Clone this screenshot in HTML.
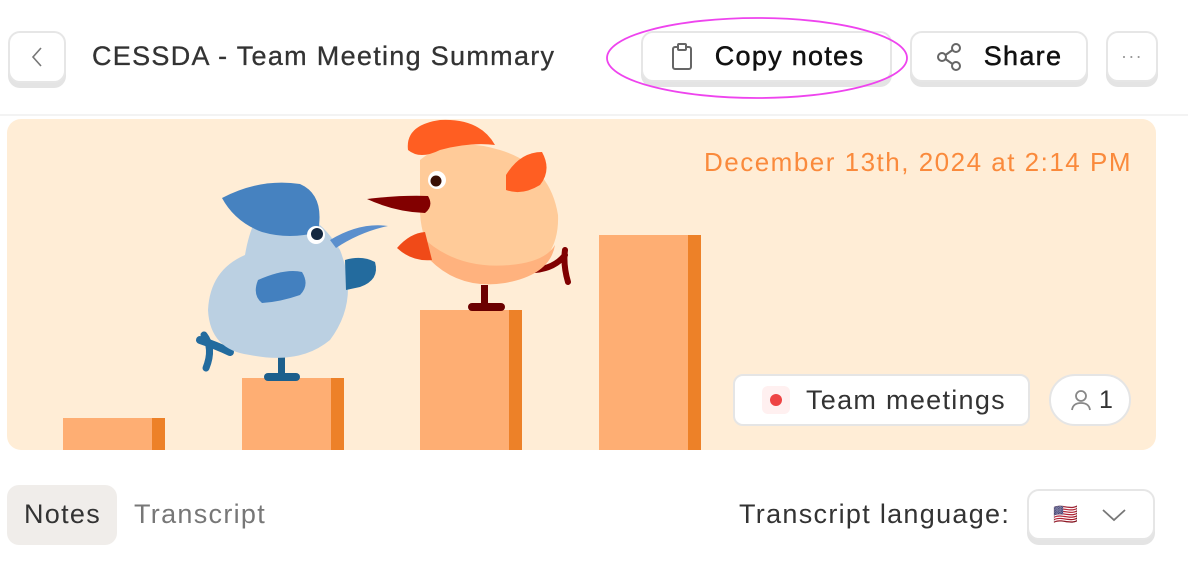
<!DOCTYPE html>
<html><head><meta charset="utf-8"><style>
*{margin:0;padding:0;box-sizing:border-box}
body{width:1188px;height:572px;background:#fff;font-family:"Liberation Sans",sans-serif;position:relative;overflow:hidden;letter-spacing:1.3px}
.btn{position:absolute;background:#fff;border:2px solid #e6e6e6;border-radius:12px;box-shadow:0 5px 0 #e4e4e4;display:flex;align-items:center;justify-content:center}
.t{position:absolute;white-space:nowrap}
.b{-webkit-text-stroke:0.5px currentColor}
</style></head><body>
<div class="btn" style="left:8px;top:31px;width:58px;height:52px"><svg width="16" height="24" viewBox="0 0 16 24"><path d="M12 3 L4 12 L12 21" fill="none" stroke="#777" stroke-width="1.6"/></svg></div>
<div class="t b" style="left:92px;top:41px;font-size:27px;color:#333;-webkit-text-stroke:0.3px #333">CESSDA - Team Meeting Summary</div>
<div class="btn" style="left:641px;top:31px;width:251px;height:51px"><svg width="26" height="30" viewBox="0 0 26 30" style="margin-right:20px"><rect x="4" y="5" width="18" height="22" rx="2" fill="none" stroke="#666" stroke-width="2"/><rect x="9" y="2" width="8" height="6" rx="1" fill="#fff" stroke="#666" stroke-width="2"/></svg><span class="b" style="font-size:27px;color:#111">Copy notes</span></div>
<div class="btn" style="left:910px;top:31px;width:178px;height:51px"><svg width="28" height="30" viewBox="0 0 28 30" style="margin-right:20px"><circle cx="20" cy="6" r="4" fill="none" stroke="#666" stroke-width="2"/><circle cx="6" cy="15" r="4" fill="none" stroke="#666" stroke-width="2"/><circle cx="20" cy="24" r="4" fill="none" stroke="#666" stroke-width="2"/><path d="M9.5 13 L16.5 8 M9.5 17 L16.5 22" stroke="#666" stroke-width="2"/></svg><span class="b" style="font-size:27px;color:#111">Share</span></div>
<div class="btn" style="left:1106px;top:31px;width:52px;height:51px;color:#999;font-size:18px">···</div>
<svg style="position:absolute;left:0;top:0" width="1188" height="120"><ellipse cx="757" cy="58" rx="150" ry="40" fill="none" stroke="#ee44ee" stroke-width="1.8"/></svg>
<div style="position:absolute;left:0;top:114px;width:1188px;height:2px;background:#f3f3f3"></div>
<div style="position:absolute;left:7px;top:119px;width:1149px;height:331px;background:#ffedd6;border-radius:14px;overflow:hidden">
<svg width="1149" height="331" viewBox="7 119 1149 331" style="position:absolute;left:0;top:0">
<rect x="63" y="418" width="102" height="40" fill="#feae73"/><rect x="152" y="418" width="13" height="40" fill="#ed8128"/>
<rect x="242" y="378" width="102" height="80" fill="#feae73"/><rect x="331" y="378" width="13" height="80" fill="#ed8128"/>
<rect x="420" y="310" width="102" height="150" fill="#feae73"/><rect x="509" y="310" width="13" height="150" fill="#ed8128"/>
<rect x="599" y="235" width="102" height="230" fill="#feae73"/><rect x="688" y="235" width="13" height="230" fill="#ed8128"/>
<path d="M200 340 Q215 345 230 352" stroke="#236b9e" stroke-width="8" fill="none" stroke-linecap="round"/>
<path d="M204 335 Q214 348 206 368" stroke="#236b9e" stroke-width="7" fill="none" stroke-linecap="round"/>
<rect x="278" y="355" width="7" height="22" fill="#1d5f8c"/><rect x="264" y="373" width="36" height="8" rx="4" fill="#1d5f8c"/>
<path d="M262 210 Q310 200 340 250 Q360 300 330 340 Q300 365 250 355 Q210 350 208 310 Q210 270 245 255 Q250 225 262 210Z" fill="#bbd0e2"/>
<path d="M345 260 Q362 255 375 262 Q380 280 360 287 L346 290Z" fill="#236b9e"/>
<path d="M222 198 Q260 178 300 184 Q325 195 318 232 Q290 240 262 232 Q235 222 222 198Z" fill="#4682c0"/>
<circle cx="316" cy="235" r="9" fill="#fff"/><circle cx="317" cy="234" r="6" fill="#142840"/>
<path d="M330 240 Q360 222 388 226 Q360 232 336 248Z" fill="#5b8fcd"/>
<path d="M258 280 Q285 268 302 272 Q310 285 300 295 Q280 302 262 303 Q252 295 258 280Z" fill="#4380bf"/>
<rect x="481" y="285" width="7" height="22" fill="#6b0000"/><rect x="468" y="303" width="37" height="8" rx="4" fill="#6b0000"/>
<path d="M535 270 Q555 268 565 255 M565 250 Q563 265 568 282" stroke="#800000" stroke-width="6" fill="none" stroke-linecap="round"/>
<path d="M420 160 Q450 135 500 150 Q550 165 558 215 Q560 265 510 280 Q465 290 440 265 Q418 240 420 200Z" fill="#ffcb99"/>
<path d="M420 235 Q455 270 510 265 Q545 262 555 245 Q550 275 505 283 Q460 290 430 260Z" fill="#ffb27e"/>
<path d="M408 150 Q405 125 440 120 Q480 118 495 145 Q470 142 440 150 Q420 160 408 150Z" fill="#ff5e22"/>
<path d="M506 175 Q520 152 542 152 Q552 170 540 185 Q522 196 506 190Z" fill="#ff5e22"/>
<path d="M397 248 Q410 233 425 232 L432 260 Q412 262 397 248Z" fill="#f04a18"/>
<circle cx="437" cy="180" r="9" fill="#fff"/><circle cx="436" cy="181" r="5.5" fill="#3a1005"/>
<path d="M367 199 Q400 195 428 196 Q434 206 425 213 Q395 212 367 199Z" fill="#820000"/>
</svg>
<div class="t" style="right:24px;top:28px;font-size:26px;color:#fa8a3c;letter-spacing:1.5px">December 13th, 2024 at 2:14 PM</div>
<div style="position:absolute;left:726px;top:255px;width:297px;height:52px;background:#fff;border:2px solid #e5e5e5;border-radius:10px;display:flex;align-items:center">
<div style="margin-left:27px;width:28px;height:28px;border-radius:6px;background:#fff0f0;display:flex;align-items:center;justify-content:center"><div style="width:12px;height:12px;border-radius:50%;background:#ee4444"></div></div>
<span style="margin-left:16px;font-size:27px;color:#333">Team meetings</span></div>
<div style="position:absolute;left:1042px;top:255px;width:82px;height:52px;background:#fff;border:2px solid #e5e5e5;border-radius:26px;display:flex;align-items:center">
<svg width="24" height="24" viewBox="0 0 24 24" style="margin-left:18px"><circle cx="12" cy="8" r="5" fill="none" stroke="#888" stroke-width="1.8"/><path d="M3 22 Q4 15 12 15 Q20 15 21 22" fill="none" stroke="#888" stroke-width="1.8"/></svg><span style="margin-left:6px;font-size:25px;color:#333">1</span></div>
</div>
<div style="position:absolute;left:7px;top:485px;width:110px;height:60px;background:#f0edea;border-radius:12px"></div>
<div class="t" style="left:24px;top:499px;font-size:27px;color:#333">Notes</div>
<div class="t" style="left:134px;top:499px;font-size:27px;color:#777">Transcript</div>
<div class="t" style="left:739px;top:499px;font-size:27px;color:#333">Transcript language:</div>
<div class="btn" style="left:1027px;top:489px;width:128px;height:51px;justify-content:flex-start"><span style="margin-left:24px;font-size:20px">🇺🇸</span><svg width="26" height="16" viewBox="0 0 26 16" style="margin-left:22px"><path d="M2 3 L13 13 L24 3" fill="none" stroke="#777" stroke-width="1.8"/></svg></div>
</body></html>
